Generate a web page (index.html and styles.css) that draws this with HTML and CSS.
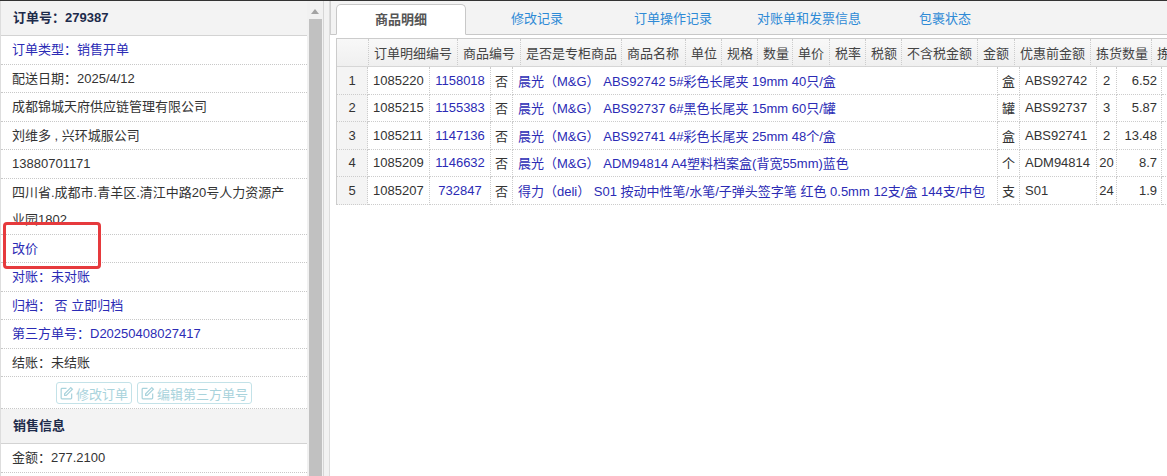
FILE: index.html
```html
<!DOCTYPE html>
<html lang="zh-CN">
<head>
  <meta charset="UTF-8" />
  <title>订单详情</title>
  <link rel="stylesheet" href="styles.css">
</head>
<body>
  <div class="topline"></div>

  <div class="layout">
    <!-- 左侧订单信息 -->
    <div class="side">
      <div class="side-panel">
        <div class="panel-title">订单号：279387</div>
        <ul class="info-list">
          <li class="link">订单类型：销售开单</li>
          <li>配送日期：2025/4/12</li>
          <li>成都锦城天府供应链管理有限公司</li>
          <li>刘维多 , 兴环城服公司</li>
          <li>13880701171</li>
          <li>四川省.成都市.青羊区.清江中路20号人力资源产业园1802</li>
          <li class="link mark-wrap">改价<span class="mark-box"></span></li>
          <li class="link">对账：未对账</li>
          <li class="link">归档： 否 立即归档</li>
          <li class="link">第三方单号：D20250408027417</li>
          <li>结账：未结账</li>
          <li class="actions">
            <button class="btn-edit" disabled>
              <svg viewBox="0 0 16 16"><path d="M8 2.5H3.2a.9.9 0 0 0-.9.9v9.4a.9.9 0 0 0 .9.9h9.4a.9.9 0 0 0 .9-.9V8" fill="none" stroke="currentColor" stroke-width="1.3"/><path d="M12.6 1.8l1.7 1.7-6.6 6.6H6V8.4z" fill="none" stroke="currentColor" stroke-width="1.3"/></svg>修改订单
            </button>
            <button class="btn-edit" disabled>
              <svg viewBox="0 0 16 16"><path d="M8 2.5H3.2a.9.9 0 0 0-.9.9v9.4a.9.9 0 0 0 .9.9h9.4a.9.9 0 0 0 .9-.9V8" fill="none" stroke="currentColor" stroke-width="1.3"/><path d="M12.6 1.8l1.7 1.7-6.6 6.6H6V8.4z" fill="none" stroke="currentColor" stroke-width="1.3"/></svg>编辑第三方单号
            </button>
          </li>
        </ul>
        <div class="panel-title">销售信息</div>
        <ul class="info-list">
          <li>金额：277.2100</li>
        </ul>
      </div>
      <div class="scrollbar">
        <span class="scroll-arrow"></span>
        <span class="scroll-thumb"></span>
      </div>
      <div class="splitter"></div>
    </div>

    <!-- 右侧标签页 -->
    <div class="main">
      <ul class="tabs">
        <li class="active">商品明细</li>
        <li>修改记录</li>
        <li>订单操作记录</li>
        <li>对账单和发票信息</li>
        <li>包裹状态</li>
      </ul>

      <div class="tab-body">
        <div class="grid">
          <table class="grid-head">
            <colgroup>
              <col style="width:32px"><col style="width:89px"><col style="width:63px"><col style="width:101px">
              <col style="width:64px"><col style="width:36px"><col style="width:36px"><col style="width:35px">
              <col style="width:37px"><col style="width:36px"><col style="width:36px"><col style="width:76px">
              <col style="width:37px"><col style="width:76px"><col style="width:61px"><col style="width:76px">
            </colgroup>
            <tr>
              <td></td><td>订单明细编号</td><td>商品编号</td><td>是否是专柜商品</td><td>商品名称</td>
              <td>单位</td><td>规格</td><td>数量</td><td>单价</td><td>税率</td><td>税额</td>
              <td>不含税金额</td><td>金额</td><td>优惠前金额</td><td>拣货数量</td><td>拣货金额</td>
            </tr>
          </table>

          <table class="grid-rows">
            <colgroup>
              <col style="width:31px"><col style="width:62px"><col style="width:61px"><col style="width:22px">
              <col style="width:485px"><col style="width:22px"><col style="width:77px"><col style="width:20px">
              <col style="width:45px"><col style="width:60px">
            </colgroup>
            <tr>
              <td class="rn">1</td><td>1085220</td><td class="code">1158018</td><td class="mid">否</td>
              <td class="name">晨光（M&amp;G） ABS92742 5#彩色长尾夹 19mm 40只/盒</td>
              <td class="mid">盒</td><td>ABS92742</td><td class="mid">2</td><td class="num">6.52</td><td></td>
            </tr>
            <tr>
              <td class="rn">2</td><td>1085215</td><td class="code">1155383</td><td class="mid">否</td>
              <td class="name">晨光（M&amp;G） ABS92737 6#黑色长尾夹 15mm 60只/罐</td>
              <td class="mid">罐</td><td>ABS92737</td><td class="mid">3</td><td class="num">5.87</td><td></td>
            </tr>
            <tr>
              <td class="rn">3</td><td>1085211</td><td class="code">1147136</td><td class="mid">否</td>
              <td class="name">晨光（M&amp;G） ABS92741 4#彩色长尾夹 25mm 48个/盒</td>
              <td class="mid">盒</td><td>ABS92741</td><td class="mid">2</td><td class="num">13.48</td><td></td>
            </tr>
            <tr>
              <td class="rn">4</td><td>1085209</td><td class="code">1146632</td><td class="mid">否</td>
              <td class="name">晨光（M&amp;G） ADM94814 A4塑料档案盒(背宽55mm)蓝色</td>
              <td class="mid">个</td><td>ADM94814</td><td class="mid">20</td><td class="num">8.7</td><td></td>
            </tr>
            <tr>
              <td class="rn">5</td><td>1085207</td><td class="code">732847</td><td class="mid">否</td>
              <td class="name">得力（deli） S01 按动中性笔/水笔/子弹头签字笔 红色 0.5mm 12支/盒 144支/中包</td>
              <td class="mid">支</td><td>S01</td><td class="mid">24</td><td class="num">1.9</td><td></td>
            </tr>
          </table>
        </div>
      </div>
    </div>
  </div>
</body>
</html>
```

FILE: styles.css
```css
html, body {
  margin: 0;
  padding: 0;
  height: 476px;
  overflow: hidden;
  background: #fff;
  font-family: "Liberation Sans", Arial, "Noto Sans CJK SC", sans-serif;
  font-size: 13px;
  color: #333;
}

.topline {
  height: 1px;
  background: #333;
}

.layout {
  display: flex;
  height: 475px;
}

/* ======================
   左侧订单信息
   ====================== */
.side {
  display: flex;
  flex: 0 0 330px;
}
.side-panel {
  width: 307px;
  box-sizing: border-box;
  border-left: 1px solid #ddd;
  overflow: hidden;
}
.panel-title {
  height: 34px;
  line-height: 34px;
  padding-left: 12px;
  background: #f3f3f3;
  border-bottom: 1px solid #d3d3d3;
  font-weight: bold;
  color: #1d2b4b;
}
.info-list {
  list-style: none;
  margin: 0;
  padding: 0;
}
.info-list li {
  line-height: 27.5px;
  padding: 0 12px 0 11px;
  border-bottom: 1px dotted #c8c8c8;
}
.info-list li.link {
  color: #2b2bb5;
}
.mark-wrap {
  position: relative;
}
/* 红色标注框 */
.mark-box {
  position: absolute;
  left: 2px;
  top: -13px;
  width: 92px;
  height: 41px;
  border: 3px solid #e63a3d;
  border-radius: 4px;
}
.info-list li.actions {
  display: flex;
  justify-content: center;
  gap: 5px;
  padding: 5px 0 4px;
  line-height: normal;
}
.btn-edit {
  display: inline-flex;
  align-items: center;
  gap: 2px;
  height: 22px;
  padding: 0 3px 0 2px;
  background: #fff;
  border: 1px solid #c3e2e8;
  border-radius: 3px;
  color: #a9d3dc;
  font-family: inherit;
  font-size: 13px;
}
.btn-edit svg {
  width: 15px;
  height: 15px;
}

/* 滚动条 */
.scrollbar {
  width: 16px;
  background: #f1f1f1;
  display: flex;
  flex-direction: column;
  align-items: center;
}
.scroll-arrow {
  margin-top: 8px;
  width: 0;
  height: 0;
  border-left: 4px solid transparent;
  border-right: 4px solid transparent;
  border-bottom: 5px solid #a3a3a3;
}
.scroll-thumb {
  margin-top: 5px;
  width: 13px;
  flex: 1;
  background: #c1c1c1;
}
.splitter {
  width: 5px;
  background: #f2f2f2;
  border-left: 1px solid #d6d6d6;
  border-right: 1px solid #dcdcdc;
}

/* ======================
   右侧标签页
   ====================== */
.main {
  flex: 1;
  min-width: 0;
  overflow: hidden;
}
.tabs {
  display: flex;
  gap: 6px;
  margin: 0;
  padding: 3px 0 0 5px;
  height: 30px;
  list-style: none;
  background: #f3f3f3;
  border-left: 1px solid #d0d0d0;
  border-bottom: 1px solid #c8c8c8;
}
.tabs li {
  width: 130px;
  height: 30px;
  line-height: 29px;
  text-align: center;
  color: #2e8ad6;
  box-sizing: border-box;
}
.tabs li.active {
  background: #fff;
  border: 1px solid #c8c8c8;
  border-bottom-color: #fff;
  border-radius: 5px 5px 0 0;
  color: #555;
  font-weight: bold;
  height: 31px;
}

.tab-body {
  padding: 3px 0 0 6px;
}
.grid {
  width: 900px;
  border-left: 1px solid #ccc;
  border-top: 1px solid #ccc;
}
.grid table {
  table-layout: fixed;
  border-spacing: 0;
  white-space: nowrap;
}
.grid td {
  padding: 0 5px;
  overflow: hidden;
  border-right: 1px dotted #ccc;
  box-sizing: border-box;
}
.grid-head {
  width: 891px;
  background: linear-gradient(#f8f8f8, #efefef);
}
.grid-head td {
  height: 28px;
  border-bottom: 1px solid #d6d6d6;
  color: #444;
}
.grid-rows {
  width: 885px;
}
.grid-rows td {
  height: 27.5px;
  border-bottom: 1px dotted #ccc;
  color: #333;
}
.grid-rows td.rn {
  text-align: center;
  background: #f4f4f4;
}
.grid-rows td.code {
  text-align: center;
  color: #2b2bb5;
}
.grid-rows td.name {
  color: #2b2bb5;
}
.grid-rows td.mid {
  text-align: center;
  padding: 0 2px;
}
.grid-rows td.num {
  text-align: right;
  padding-right: 4px;
}
```
